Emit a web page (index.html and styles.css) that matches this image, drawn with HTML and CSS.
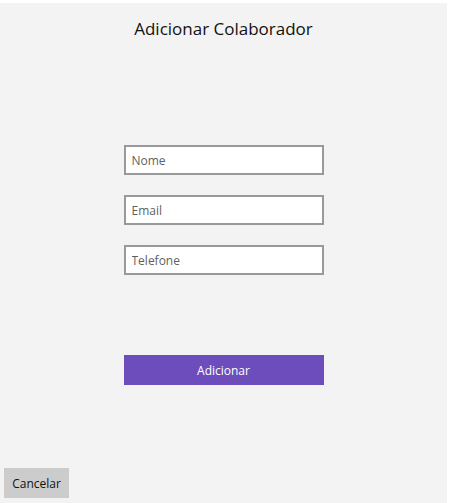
FILE: index.html
```html
<!DOCTYPE html>
<html lang="pt">
<head>
<meta charset="utf-8">
<title>Adicionar Colaborador</title>
<link rel="stylesheet" href="styles.css">
</head>
<body>
<div class="app">
  <h1 class="title">Adicionar Colaborador</h1>
  <form class="form">
    <input class="field" type="text" placeholder="Nome">
    <input class="field" type="email" placeholder="Email">
    <input class="field" type="tel" placeholder="Telefone">
    <button class="primary" type="button">Adicionar</button>
  </form>
  <div class="footer">
    <button class="secondary" type="button">Cancelar</button>
  </div>
</div>
</body>
</html>
```
FILE: styles.css
```css
html, body {
  margin: 0;
  padding: 0;
  background: #ffffff;
}
body {
  font-family: "Open Sans", "Noto Sans", sans-serif;
}
.app {
  margin-top: 3px;
  width: 447px;
  height: 500px;
  background: #f3f3f3;
  display: flex;
  flex-direction: column;
  align-items: center;
  box-sizing: border-box;
}
.title {
  margin: 13px 0 0 0;
  font-size: 17px;
  font-weight: 400;
  line-height: 26px;
  color: #111;
}
.form {
  margin-top: 103px;
  display: flex;
  flex-direction: column;
  width: 200px;
}
.field {
  box-sizing: border-box;
  width: 200px;
  height: 30px;
  margin: 0 0 20px 0;
  border: 2px solid #999999;
  background: #fff;
  padding: 1px 6px 0 6px;
  font-family: inherit;
  font-size: 12px;
  color: #333;
  outline: none;
}
.field::placeholder {
  color: #5f5f5f;
}
.primary {
  margin-top: 60px;
  height: 30px;
  width: 200px;
  border: none;
  background: #6c4dbb;
  color: #fff;
  font-family: inherit;
  font-size: 12px;
}
.footer {
  margin-top: auto;
  align-self: stretch;
  padding: 0 0 5px 4px;
}
.secondary {
  width: 65px;
  height: 30px;
  border: none;
  background: #cccccc;
  color: #111;
  font-family: inherit;
  font-size: 12px;
  padding: 0;
}
```
